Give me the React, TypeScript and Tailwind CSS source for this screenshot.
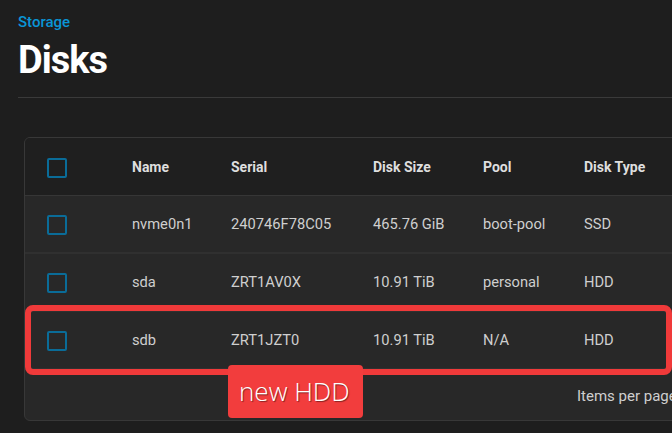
const disks = [
  { name: "nvme0n1", serial: "240746F78C05", size: "465.76 GiB", pool: "boot-pool", type: "SSD" },
  { name: "sda", serial: "ZRT1AV0X", size: "10.91 TiB", pool: "personal", type: "HDD" },
  { name: "sdb", serial: "ZRT1JZT0", size: "10.91 TiB", pool: "N/A", type: "HDD" },
];

const cols = "grid grid-cols-[107px_99px_142px_110px_101px_1fr] items-center";

const Checkbox = () => (
  <div className="ml-[22px] w-5 h-5 rounded-[2px] border-2 border-[#0a6c98]" />
);

const App = () => {
  return (
    <div
      className="relative w-[672px] h-[433px] overflow-hidden bg-[#1e1e1e]"
      style={{ fontFamily: "Roboto, 'Liberation Sans', sans-serif" }}
    >
      <div className="pl-[18px] pt-[12px]">
        <div className="text-[15px] font-medium leading-[20px] text-[#0a95d6]">Storage</div>
        <h1 className="mt-[5px] text-[38px] font-bold leading-[46px] tracking-[-1px] text-white">
          Disks
        </h1>
        <div className="mt-[14px] h-px bg-[#3a3a3a]" />
      </div>

      <div className="ml-[24px] mt-[39px] w-[700px] rounded-md border border-[#383838] bg-[#282828] overflow-hidden">
        <div className={`${cols} h-[58px] pt-[2px] bg-[#1f1f1f] border-b border-[#363636] text-[14px] font-bold text-[#dedede]`}>
          <Checkbox />
          <div>Name</div>
          <div>Serial</div>
          <div>Disk Size</div>
          <div>Pool</div>
          <div>Disk Type</div>
        </div>
        {disks.map((d) => (
          <div
            key={d.name}
            className={`${cols} h-[58px] pt-[1px] border-b-2 border-[#303030] text-[14.7px] text-[#cfcfcf]`}
          >
            <Checkbox />
            <div>{d.name}</div>
            <div>{d.serial}</div>
            <div>{d.size}</div>
            <div>{d.pool}</div>
            <div>{d.type}</div>
          </div>
        ))}
        <div className="h-[50px] pt-[2px] flex items-center pl-[552px] text-[15px] text-[#cfcfcf]">
          Items per page:
        </div>
      </div>

      {/* annotation */}
      <div className="absolute left-[25px] top-[305px] w-[647px] h-[70px] rounded-[8px] border-[6px] border-[#f03a3a]" />
      <div
        className="absolute left-[228px] top-[365px] w-[135px] h-[53px] rounded-[4px] bg-[#f23d3d] flex items-center pl-[11px] text-[26px] font-light text-white"
        style={{ fontFamily: "'Open Sans', Roboto, sans-serif", textShadow: "1px 1px 1px rgba(0,0,0,0.45)" }}
      >
        new HDD
      </div>
    </div>
  );
};

export default App;
